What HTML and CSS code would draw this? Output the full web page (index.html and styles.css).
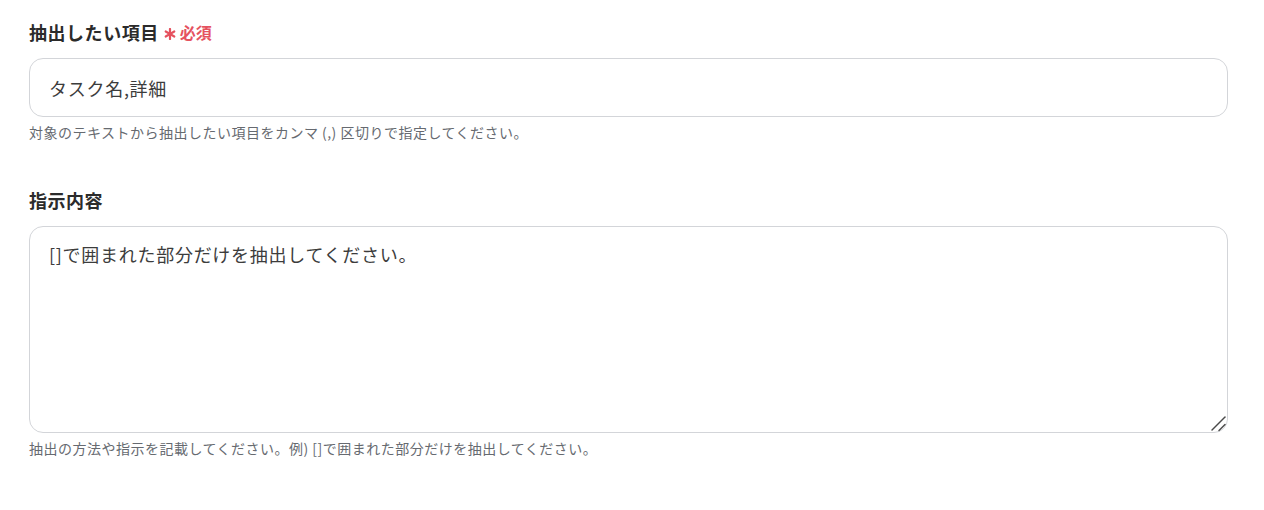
FILE: index.html
```html
<!DOCTYPE html>
<html lang="ja">
<head>
<meta charset="utf-8">
<link rel="stylesheet" href="styles.css">
</head>
<body>
<div class="form">
  <div class="field">
    <div class="label">抽出したい項目<span class="req"><svg class="ast" viewBox="0 0 12 12" width="12" height="12"><g stroke="currentColor" stroke-width="2.2" stroke-linecap="round"><line x1="6" y1="1" x2="6" y2="11"/><line x1="1.7" y1="3.5" x2="10.3" y2="8.5"/><line x1="1.7" y1="8.5" x2="10.3" y2="3.5"/></g></svg>必須</span></div>
    <input class="input" type="text" value="タスク名,詳細">
    <div class="help">対象のテキストから抽出したい項目をカンマ (,) 区切りで指定してください。</div>
  </div>
  <div class="field">
    <div class="label">指示内容</div>
    <div class="ta-wrap">
      <textarea class="textarea">[]で囲まれた部分だけを抽出してください。</textarea>
      <svg class="grip" viewBox="0 0 18 18" width="18" height="18"><g stroke="#4a4a4a" stroke-width="1.5" stroke-linecap="round"><line x1="3" y1="16" x2="16" y2="3"/><line x1="10" y1="16.5" x2="16" y2="10.5"/></g></svg>
    </div>
    <div class="help">抽出の方法や指示を記載してください。例) []で囲まれた部分だけを抽出してください。</div>
  </div>
</div>
</body>
</html>
```

FILE: styles.css
```css
html, body {
  margin: 0;
  padding: 0;
  background: #ffffff;
}
body {
  font-family: "Noto Sans CJK JP", "Noto Sans", sans-serif;
  color: #333333;
}
.form {
  padding: 18px 36px 0 29px;
  display: flex;
  flex-direction: column;
  gap: 44px;
}
.field {
  display: flex;
  flex-direction: column;
}
.label {
  font-size: 18px;
  font-weight: 700;
  line-height: 28px;
  letter-spacing: 0.03em;
  color: #2b2b2b;
  display: flex;
  align-items: center;
  margin-bottom: 12px;
}
.req {
  display: inline-flex;
  align-items: center;
  color: #e5525f;
  font-size: 16px;
  font-weight: 700;
  margin-left: 5px;
  gap: 4px;
  letter-spacing: 0;
}
.ast {
  display: block;
  margin-top: 3px;
}
.input, .textarea {
  box-sizing: border-box;
  width: 100%;
  border: 1px solid #d3d5d9;
  border-radius: 14px;
  font-family: "Noto Sans CJK JP", "Noto Sans", sans-serif;
  font-size: 18px;
  letter-spacing: 0.04em;
  color: #3c3c3c;
  padding: 0 19px;
  outline: none;
  background: #fff;
  margin: 0;
}
.input {
  height: 59px;
}
.ta-wrap {
  position: relative;
}
.textarea {
  height: 207px;
  padding-top: 14px;
  line-height: 27px;
  resize: none;
  display: block;
}
.grip {
  position: absolute;
  right: 1px;
  bottom: 1px;
  pointer-events: none;
}
.help {
  margin-top: 5px;
  font-size: 14px;
  line-height: 20px;
  letter-spacing: 0.035em;
  color: #666a70;
}
```
